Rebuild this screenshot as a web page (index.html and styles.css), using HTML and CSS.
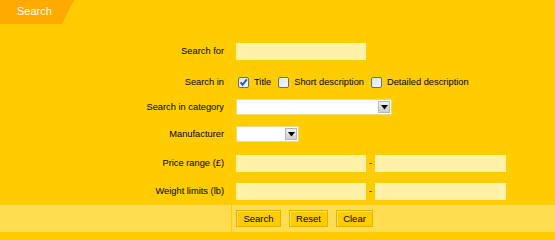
FILE: index.html
```html
<!DOCTYPE html>
<html>
<head>
<meta charset="utf-8">
<link rel="stylesheet" href="styles.css">
</head>
<body>
<div class="panel">
  <div class="tabbar"><div class="tab">Search</div></div>
  <form class="form">
    <div class="row r1">
      <label class="lbl">Search for</label>
      <div class="field"><input class="txt" type="text"></div>
    </div>
    <div class="row r2">
      <label class="lbl">Search in</label>
      <div class="field checks">
        <span class="cb checked"><svg width="11" height="11" viewBox="0 0 11 11"><path d="M2.6 5.4 L4.6 7.8 L8.8 2.4" fill="none" stroke="#2a4fb8" stroke-width="1.8"/></svg></span><span class="cbl">Title</span>
        <span class="cb"></span><span class="cbl">Short description</span>
        <span class="cb"></span><span class="cbl">Detailed description</span>
      </div>
    </div>
    <div class="row r3">
      <label class="lbl">Search in category</label>
      <div class="field"><div class="sel sel-wide"><span class="arrow"><svg width="7" height="5" viewBox="0 0 7 5"><path d="M0 0 H7 L3.5 4.5 Z" fill="#000"/></svg></span></div></div>
    </div>
    <div class="row r4">
      <label class="lbl">Manufacturer</label>
      <div class="field"><div class="sel sel-small"><span class="arrow"><svg width="7" height="5" viewBox="0 0 7 5"><path d="M0 0 H7 L3.5 4.5 Z" fill="#000"/></svg></span></div></div>
    </div>
    <div class="row r5">
      <label class="lbl">Price range (£)</label>
      <div class="field range"><input class="txt" type="text"><span class="dash">-</span><input class="txt" type="text"></div>
    </div>
    <div class="row r6">
      <label class="lbl">Weight limits (lb)</label>
      <div class="field range"><input class="txt" type="text"><span class="dash">-</span><input class="txt" type="text"></div>
    </div>
  </form>
  <div class="footer">
    <div class="fcell fleft"></div>
    <div class="fcell fright">
      <button class="btn btn-search" type="button">Search</button>
      <button class="btn btn-reset" type="button">Reset</button>
      <button class="btn btn-clear" type="button">Clear</button>
    </div>
  </div>
</div>
</body>
</html>
```
FILE: styles.css
```css
html, body {
  margin: 0;
  padding: 0;
}
body {
  background: #ffcc00;
  font-family: "Liberation Sans", Arial, sans-serif;
  font-size: 9.3px;
  color: #000;
  width: 555px;
  height: 235px;
  overflow: hidden;
}
.panel {
  display: flex;
  flex-direction: column;
  height: 235px;
}
.tabbar {
  height: 24px;
  flex: none;
  display: flex;
}
.tab {
  width: 74px;
  height: 24px;
  background: #ffaa00;
  clip-path: polygon(0 0, 74px 0, 62px 24px, 0 24px);
  color: #fff;
  font-size: 11px;
  line-height: 23px;
  padding-left: 17px;
  box-sizing: border-box;
}
.form {
  margin: 0;
  padding-top: 13px;
  display: flex;
  flex-direction: column;
  flex: none;
}
.row {
  display: grid;
  grid-template-columns: 224px 1fr;
  column-gap: 12px;
  align-items: center;
  flex: none;
  box-sizing: border-box;
}
.r1 { height: 28px; }
.r2 { height: 30px; padding-top: 4px; }
.r3 { height: 24px; }
.r4 { height: 30px; }
.r5 { height: 28px; }
.r6 { height: 28px; }
.lbl {
  text-align: right;
  white-space: nowrap;
}
.field {
  display: flex;
  align-items: center;
}
.txt {
  width: 130px;
  height: 17px;
  box-sizing: border-box;
  border: none;
  background: #fff1a8;
  margin: 0;
  padding: 0;
}
.range .dash {
  width: 9px;
  text-align: center;
  font-size: 9px;
}
.range .txt + .dash + .txt {
  width: 131px;
}
.checks {
  padding-left: 2px;
}
.cb {
  display: inline-block;
  width: 11px;
  height: 11px;
  box-sizing: border-box;
  border: 1px solid #5a6f9c;
  border-radius: 2px;
  background: linear-gradient(135deg, #dfe3ea 0%, #f6f7f9 100%);
  position: relative;
}
.cb svg {
  position: absolute;
  left: -1px;
  top: -1px;
}
.cbl {
  margin-left: 5px;
  margin-right: 7px;
}
.sel {
  height: 16px;
  box-sizing: border-box;
  background: #fff;
  border: 1px solid #e9d98a;
  display: flex;
  justify-content: flex-end;
  align-items: center;
  padding-right: 1px;
}
.sel-wide { width: 156px; }
.sel-small { width: 63px; }
.arrow {
  width: 12px;
  height: 12px;
  box-sizing: border-box;
  border: 1px solid #b8b8b8;
  background: linear-gradient(#f2f2f2, #cfcfcf);
  display: flex;
  align-items: center;
  justify-content: center;
}
.footer {
  display: grid;
  grid-template-columns: 231px 1fr;
  column-gap: 1px;
  height: 27px;
  flex: none;
}
.fcell {
  background: #ffdc50;
}
.fright {
  display: flex;
  align-items: center;
  padding-left: 4px;
  gap: 8px;
}
.btn {
  height: 17px;
  margin: 0;
  padding: 0;
  font-family: "Liberation Sans", Arial, sans-serif;
  font-size: 9.5px;
  color: #000;
  background: #ffcc00;
  border: 1px solid #e6b400;
  box-shadow: inset 1px 1px 0 #ffe066;
}
.btn-search { width: 45px; }
.btn-reset { width: 39px; }
.btn-clear { width: 37px; }
```
